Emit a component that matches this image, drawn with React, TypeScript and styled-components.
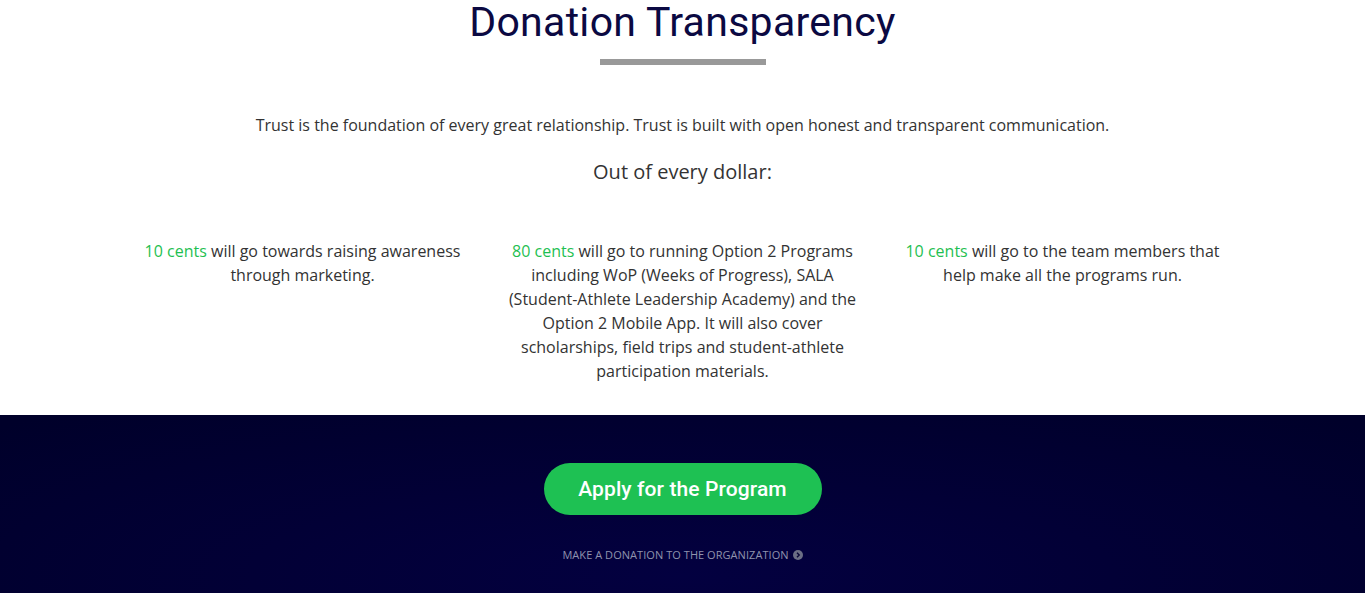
import React from "react";
import styled, { createGlobalStyle } from "styled-components";

const Global = createGlobalStyle`
  html, body { margin: 0; padding: 0; background: #fff; }
  body { font-family: "Open Sans", "Liberation Sans", sans-serif; color: #333; }
`;

const Page = styled.div`
  display: flex;
  flex-direction: column;
`;

const WhiteSection = styled.section`
  display: flex;
  flex-direction: column;
  align-items: center;
  padding-bottom: 32px;
`;

const Title = styled.h1`
  margin: 0;
  font-family: Roboto, "Liberation Sans", sans-serif;
  font-weight: 400;
  font-size: 41px;
  line-height: 44px;
  color: #0b0942;
  letter-spacing: 0.3px;
`;

const Divider = styled.div`
  width: 166px;
  height: 6px;
  background: #999;
  margin-top: 15px;
`;

const Lead = styled.p`
  margin: 49px 0 0;
  font-size: 16px;
  line-height: 22px;
  color: #333;
  text-align: center;
`;

const Subhead = styled.h3`
  margin: 22px 0 0;
  font-size: 20px;
  font-weight: 400;
  line-height: 28px;
  color: #333;
`;

const Columns = styled.div`
  display: grid;
  grid-template-columns: repeat(3, 380px);
  width: 1140px;
  margin-top: 53px;
`;

const Column = styled.div`
  padding: 0 15px;
  font-size: 16px;
  line-height: 24px;
  text-align: center;
  color: #333;
`;

const Cents = styled.span`
  color: #1fbf52;
`;

const DarkSection = styled.section`
  height: 178px;
  display: flex;
  flex-direction: column;
  align-items: center;
  background: radial-gradient(ellipse 70% 120% at 50% 90%, #030040 0%, #020036 45%, #00002a 100%);
`;

const ApplyButton = styled.a`
  margin-top: 48px;
  width: 278px;
  height: 52px;
  border-radius: 26px;
  background: #1ec153;
  color: #fff;
  display: flex;
  align-items: center;
  justify-content: center;
  font-family: Roboto, "Liberation Sans", sans-serif;
  font-size: 21px;
  font-weight: 500;
  text-decoration: none;
  letter-spacing: 0.1px;
`;

const DonateLink = styled.a`
  margin-top: 33px;
  display: flex;
  align-items: center;
  gap: 4px;
  font-size: 11px;
  color: #8f93ad;
  text-transform: uppercase;
  text-decoration: none;
  line-height: 14px;
  letter-spacing: 0.05px;
`;

const Arrow = () => (
  <svg width="10" height="10" viewBox="0 0 10 10">
    <circle cx="5" cy="5" r="5" fill="#6b6e85" />
    <path d="M4 2.8 L6.2 5 L4 7.2" stroke="#0a0838" strokeWidth="1.4" fill="none" />
  </svg>
);

export default function App() {
  return (
    <Page>
      <Global />
      <WhiteSection>
        <Title>Donation Transparency</Title>
        <Divider />
        <Lead>
          Trust is the foundation of every great relationship. Trust is built with open honest and transparent communication.
        </Lead>
        <Subhead>Out of every dollar:</Subhead>
        <Columns>
          <Column>
            <Cents>10 cents</Cents> will go towards raising awareness through marketing.
          </Column>
          <Column>
            <Cents>80 cents</Cents> will go to running Option 2 Programs including WoP (Weeks of Progress), SALA (Student-Athlete Leadership Academy) and the Option 2 Mobile App. It will also cover scholarships, field trips and student-athlete participation materials.
          </Column>
          <Column>
            <Cents>10 cents</Cents> will go to the team members that help make all the programs run.
          </Column>
        </Columns>
      </WhiteSection>
      <DarkSection>
        <ApplyButton href="#">Apply for the Program</ApplyButton>
        <DonateLink href="#">
          Make a donation to the organization <Arrow />
        </DonateLink>
      </DarkSection>
    </Page>
  );
}
